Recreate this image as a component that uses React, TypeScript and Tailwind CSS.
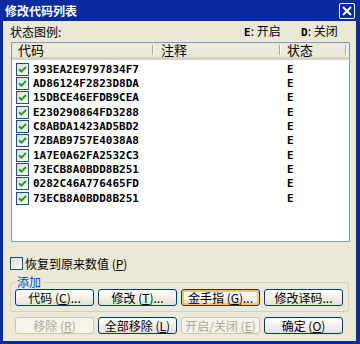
import React from 'react';

const codes = [
  '393EA2E9797834F7',
  'AD86124F2823D8DA',
  '15DBCE46EFDB9CEA',
  'E230290864FD3288',
  'C8ABDA1423AD5BD2',
  '72BAB9757E4038A8',
  '1A7E0A62FA2532C3',
  '73ECB8A0BDD8B251',
  '0282C46A776465FD',
  '73ECB8A0BDD8B251',
];

const cjk = "font-['Noto_Sans_CJK_SC','Noto_Sans',sans-serif]";
const mono = "font-['DejaVu_Sans_Mono','Liberation_Mono',monospace]";

const Check: React.FC<{ checked?: boolean }> = ({ checked }) => (
  <div className="w-[13px] h-[13px] border border-[#1c5180] bg-linear-to-br from-[#dcdcd7] to-white flex items-center justify-center shrink-0">
    {checked && (
      <svg width="9" height="9" viewBox="0 0 9 9">
        <path d="M1 4.2 L3.4 6.6 L8 2" stroke="#21a121" strokeWidth="2" fill="none" />
      </svg>
    )}
  </div>
);

const Btn: React.FC<{ children: React.ReactNode; disabled?: boolean; hot?: boolean }> = ({ children, disabled, hot }) => (
  <button
    className={
      disabled
        ? `w-[79px] h-[17px] rounded-[3px] border border-[#c9c7ba] bg-[#f5f4ea] text-[#aca899] text-[12px] leading-[14px] flex items-center justify-center ${cjk}`
        : hot
        ? `w-[79px] h-[17px] rounded-[3px] border border-[#003c74] bg-linear-to-b from-white to-[#e6e3d6] shadow-[inset_0_0_0_2px_#f7c46a] text-black text-[12px] leading-[14px] flex items-center justify-center ${cjk}`
        : `w-[79px] h-[17px] rounded-[3px] border border-[#003c74] bg-linear-to-b from-white to-[#e6e3d6] text-black text-[12px] leading-[14px] flex items-center justify-center ${cjk}`
    }
  >
    {children}
  </button>
);

export default function App() {
  return (
    <div className={`w-[360px] h-[344px] bg-[#0a2aa0] flex flex-col ${cjk}`}>
      {/* title bar */}
      <div className="h-[21px] flex items-center justify-between pl-[5px] pr-[5px]">
        <span className="text-white font-bold text-[12px] leading-[14px] tracking-[0px]">修改代码列表</span>
        <div className="w-[16px] h-[16px] border border-white rounded-[2px] flex items-center justify-center mt-[1px]">
          <svg width="10" height="10" viewBox="0 0 10 10">
            <path d="M1 1 L9 9 M9 1 L1 9" stroke="white" strokeWidth="2" />
          </svg>
        </div>
      </div>

      {/* body */}
      <div className="flex-1 ml-[3px] mr-[4px] mb-[3px] bg-[#ece9d8] flex flex-col">
        <div className="h-[21px] flex items-center pl-[7px] text-[12px] leading-[14px] text-black">
          <span className="flex-1">状态图例:</span>
          <span className="w-[57px]"><b className={`${mono} text-[11px]`}>E</b>: 开启</span>
          <span className="w-[55px]"><b className={`${mono} text-[11px]`}>D</b>: 关闭</span>
        </div>

        {/* list view */}
        <div className="ml-[8px] w-[339px] h-[200px] border border-[#7f9db9] bg-white flex flex-col">
          <div className="h-[17px] flex bg-[#ebeadb] border-b-[3px] border-[#d6d2c2] text-[13px] leading-[14px] text-black">
            <div className="w-[142px] pl-[6px] flex items-center justify-between">
              <span>代码</span>
              <span className="w-[2px] h-[10px] border-l border-[#aca899] border-r border-r-white" />
            </div>
            <div className="w-[127px] pl-[7px] flex items-center justify-between">
              <span>注释</span>
              <span className="w-[2px] h-[10px] border-l border-[#aca899] border-r border-r-white" />
            </div>
            <div className="w-[66px] pl-[6px] flex items-center justify-between">
              <span>状态</span>
              <span className="w-[2px] h-[10px] border-l border-[#aca899] border-r border-r-white" />
            </div>
          </div>
          <div className="pt-[2px] flex flex-col">
            {codes.map((c, i) => (
              <div key={i} className="h-[14.33px] flex items-center">
                <div className="w-[142px] pl-[4px] flex items-center gap-[4px]">
                  <Check checked />
                  <span className={`${mono} font-bold text-[11px] leading-[13px] text-black`}>{c}</span>
                </div>
                <div className="w-[127px]" />
                <div className={`pl-[6px] ${mono} font-bold text-[11px] leading-[13px] text-black`}>E</div>
              </div>
            ))}
          </div>
        </div>

        {/* restore checkbox */}
        <div className="mt-[15px] ml-[7px] flex items-center gap-[2px] text-[12px] leading-[14px] text-black h-[13px]">
          <Check />
          <span>恢复到原来数值 (<u>P</u>)</span>
        </div>

        {/* group */}
        <fieldset className="mt-[5px] ml-[7px] w-[339px] border border-[#d0d0bf] rounded-[3px] pl-[4px] pb-[5px]">
          <legend className="px-[2px] text-[12px] leading-[14px] text-[#0046d5]">添加</legend>
          <div className="flex gap-[4px]">
            <Btn>代码 (<u>C</u>)...</Btn>
            <Btn>修改 (<u>T</u>)...</Btn>
            <Btn hot>金手指 (<u>G</u>)...</Btn>
            <Btn>修改译码...</Btn>
          </div>
        </fieldset>

        <div className="mt-[5px] ml-[12px] flex gap-[4px]">
          <Btn disabled>移除 (<u>R</u>)</Btn>
          <Btn>全部移除 (<u>L</u>)</Btn>
          <Btn disabled>开启/关闭 (<u>E</u>)</Btn>
          <Btn>确定 (<u>O</u>)</Btn>
        </div>
      </div>
    </div>
  );
}
